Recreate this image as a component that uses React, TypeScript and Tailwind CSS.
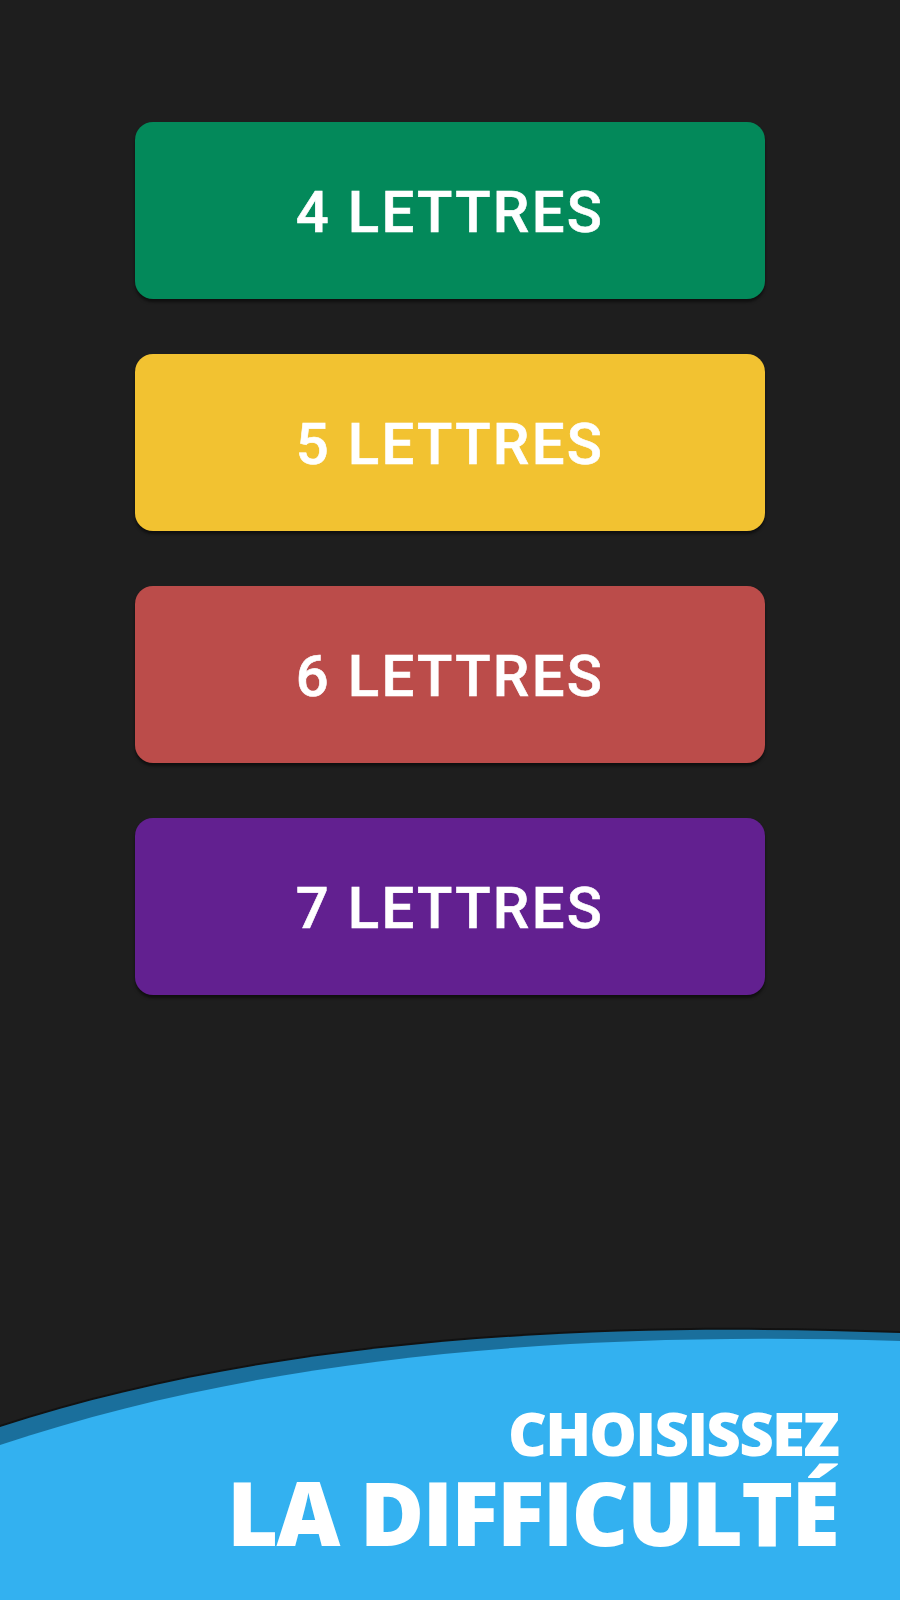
import React from "react";

const buttons = [
  { label: "4 LETTRES", bg: "bg-[#03895a]" },
  { label: "5 LETTRES", bg: "bg-[#f2c231]" },
  { label: "6 LETTRES", bg: "bg-[#bb4c4a]" },
  { label: "7 LETTRES", bg: "bg-[#622090]" },
];

export default function App() {
  return (
    <div className="w-[900px] h-[1600px] bg-[#1e1e1e] flex flex-col overflow-hidden">
      <div className="flex flex-col gap-[55px] pt-[122px] px-[135px]">
        {buttons.map((b) => (
          <div
            key={b.label}
            className={`${b.bg} h-[177px] rounded-[18px] flex items-center justify-center shadow-[0_3px_3px_rgba(0,0,0,0.5)]`}
          >
            <span
              className="text-white text-[58px] font-medium tracking-[0.04em] leading-none pt-[2px] [-webkit-text-stroke:0.6px_white]"
              style={{ fontFamily: 'Roboto, "Noto Sans", sans-serif' }}
            >
              {b.label}
            </span>
          </div>
        ))}
      </div>

      <div className="mt-auto relative h-[300px]">
        <svg
          className="absolute inset-0"
          width="900"
          height="300"
          viewBox="0 0 900 300"
          preserveAspectRatio="none"
        >
          <path d="M0 125 C 250 44, 550 18, 900 31 L900 300 L0 300 Z" fill="#121212" />
          <path d="M0 127 C 250 46, 550 20, 900 33 L900 300 L0 300 Z" fill="#1a6f9c" />
          <path d="M0 145 C 250 61, 550 30, 900 41 L900 300 L0 300 Z" fill="#33b1f0" />
        </svg>
        <div
          className="relative flex flex-col items-end pr-[62px] pt-[105px] text-white font-extrabold"
          style={{ fontFamily: '"Open Sans", "Noto Sans", sans-serif' }}
        >
          <div className="text-[60px] leading-[56px] tracking-[-0.03em]">CHOISISSEZ</div>
          <div className="mt-[5px] text-[88px] leading-[92px] tracking-[-0.02em]">LA DIFFICULTÉ</div>
        </div>
      </div>
    </div>
  );
}
